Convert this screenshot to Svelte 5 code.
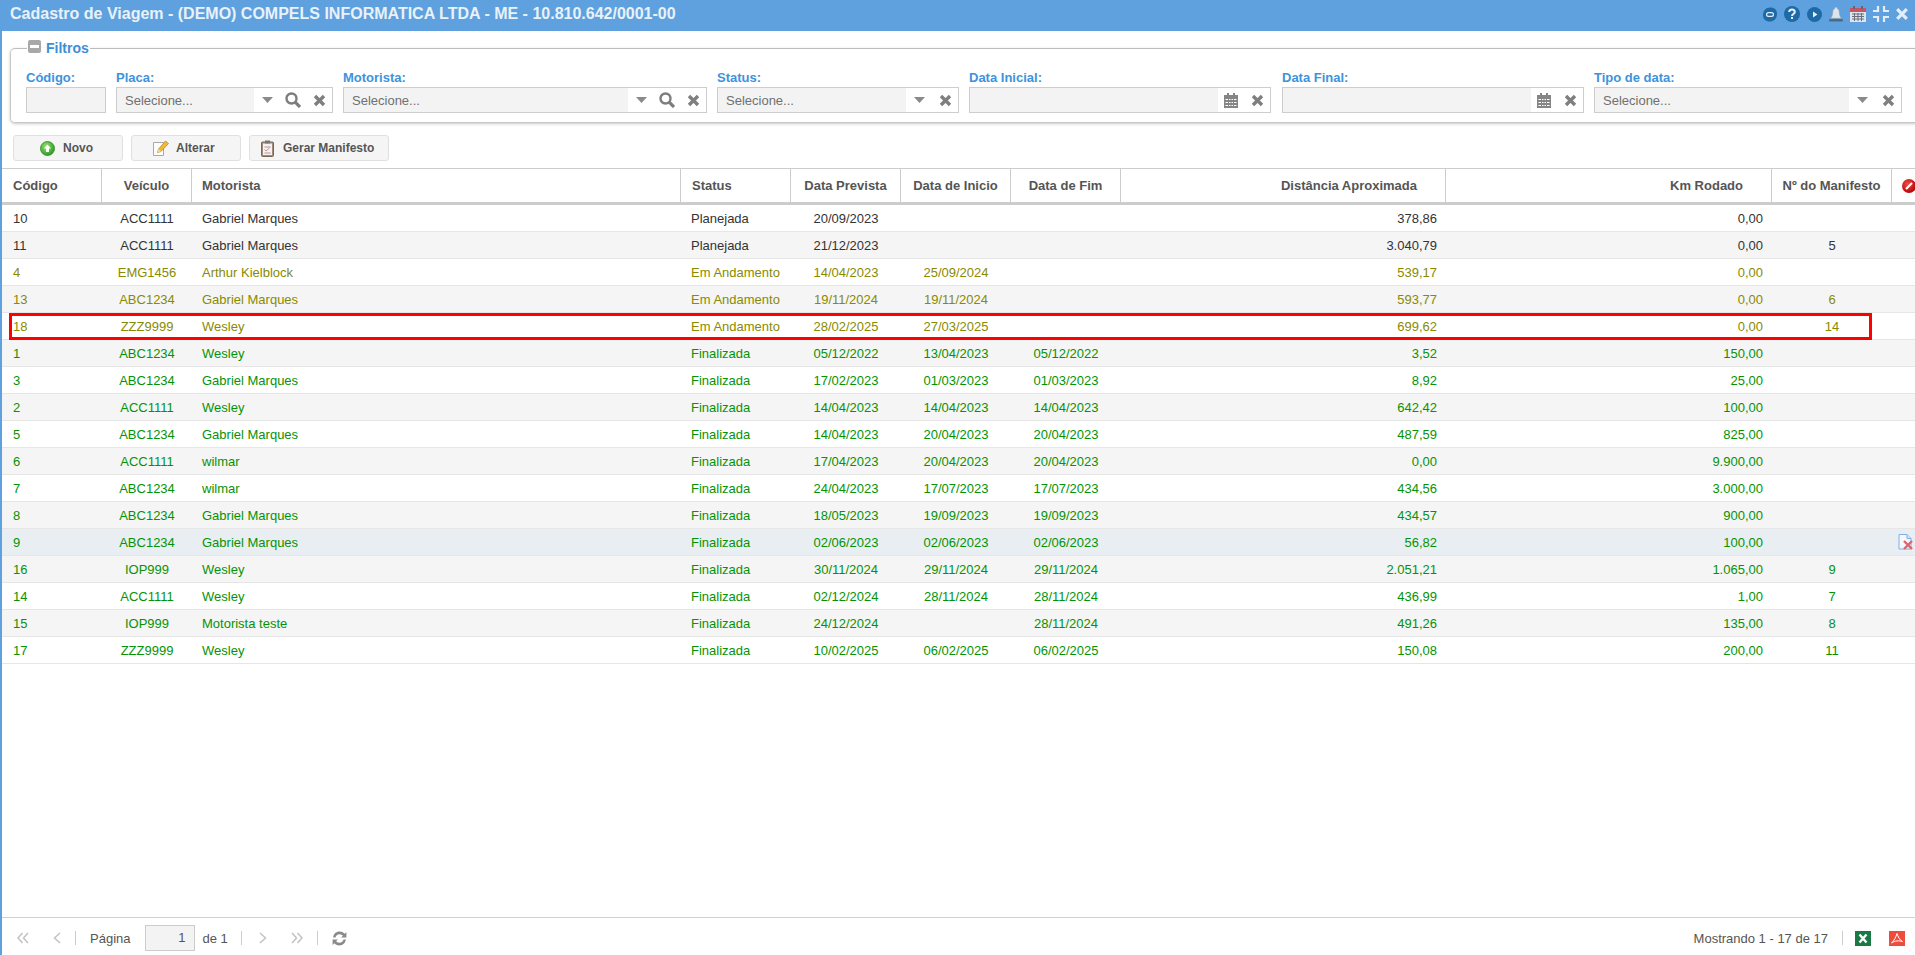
<script>
  const P = 'p', A = 'a', F = 'f';
  const statusName = { p: 'Planejada', a: 'Em Andamento', f: 'Finalizada' };
  const rows = [
    ['10','ACC1111','Gabriel Marques',P,'20/09/2023','','','378,86','0,00',''],
    ['11','ACC1111','Gabriel Marques',P,'21/12/2023','','','3.040,79','0,00','5'],
    ['4','EMG1456','Arthur Kielblock',A,'14/04/2023','25/09/2024','','539,17','0,00',''],
    ['13','ABC1234','Gabriel Marques',A,'19/11/2024','19/11/2024','','593,77','0,00','6'],
    ['18','ZZZ9999','Wesley',A,'28/02/2025','27/03/2025','','699,62','0,00','14'],
    ['1','ABC1234','Wesley',F,'05/12/2022','13/04/2023','05/12/2022','3,52','150,00',''],
    ['3','ABC1234','Gabriel Marques',F,'17/02/2023','01/03/2023','01/03/2023','8,92','25,00',''],
    ['2','ACC1111','Wesley',F,'14/04/2023','14/04/2023','14/04/2023','642,42','100,00',''],
    ['5','ABC1234','Gabriel Marques',F,'14/04/2023','20/04/2023','20/04/2023','487,59','825,00',''],
    ['6','ACC1111','wilmar',F,'17/04/2023','20/04/2023','20/04/2023','0,00','9.900,00',''],
    ['7','ABC1234','wilmar',F,'24/04/2023','17/07/2023','17/07/2023','434,56','3.000,00',''],
    ['8','ABC1234','Gabriel Marques',F,'18/05/2023','19/09/2023','19/09/2023','434,57','900,00',''],
    ['9','ABC1234','Gabriel Marques',F,'02/06/2023','02/06/2023','02/06/2023','56,82','100,00',''],
    ['16','IOP999','Wesley',F,'30/11/2024','29/11/2024','29/11/2024','2.051,21','1.065,00','9'],
    ['14','ACC1111','Wesley',F,'02/12/2024','28/11/2024','28/11/2024','436,99','1,00','7'],
    ['15','IOP999','Motorista teste',F,'24/12/2024','','28/11/2024','491,26','135,00','8'],
    ['17','ZZZ9999','Wesley',F,'10/02/2025','06/02/2025','06/02/2025','150,08','200,00','11']
  ];
  const filters = [
    { label: 'Código:', kind: 'plain' },
    { label: 'Placa:', kind: 'select', text: 'Selecione...', search: true },
    { label: 'Motorista:', kind: 'select', text: 'Selecione...', search: true },
    { label: 'Status:', kind: 'select', text: 'Selecione...' },
    { label: 'Data Inicial:', kind: 'date' },
    { label: 'Data Final:', kind: 'date' },
    { label: 'Tipo de data:', kind: 'select', text: 'Selecione...' }
  ];
  const cols = ['c1','c2','c3','c4','c5','c5','c5','c6','c7','c8','c9'];
</script>

{#snippet xIcon()}
  <svg width="13" height="13" viewBox="0 0 13 13"><path d="M2 2 L11 11 M11 2 L2 11" stroke="#7f7f7f" stroke-width="3.4" fill="none"/></svg>
{/snippet}
{#snippet caret()}
  <svg width="11" height="6" viewBox="0 0 11 6"><path d="M0 0 H11 L5.5 6 Z" fill="#8a8a8a"/></svg>
{/snippet}
{#snippet searchIcon()}
  <svg width="16" height="16" viewBox="0 0 16 16"><circle cx="6.5" cy="6.5" r="5" fill="none" stroke="#7d7d7d" stroke-width="2.4"/><path d="M10.2 10.2 L15 15" stroke="#7d7d7d" stroke-width="3.2"/></svg>
{/snippet}
{#snippet calIcon()}
  <svg width="14" height="16" viewBox="0 0 14 16"><path d="M0 3 H14 V16 H0 Z" fill="#858585"/><rect x="3" y="1" width="2" height="3" fill="#858585"/><rect x="9" y="1" width="2" height="3" fill="#858585"/><path d="M1.5 7.5 H12.5 M1.5 10.5 H12.5 M1.5 13.5 H12.5" stroke="#fff" stroke-width="1"/><path d="M4.5 6.5 V15 M7 6.5 V15 M9.5 6.5 V15" stroke="#858585" stroke-width="1"/></svg>
{/snippet}

<div class="app">
  <header class="titlebar">
    <h1>Cadastro de Viagem - (DEMO) COMPELS INFORMATICA LTDA - ME - 10.810.642/0001-00</h1>
    <div class="tools">
      <svg width="14" height="15" viewBox="0 0 14 15"><path d="M7 .5 C11 .5 14 2 14 7 C14 12 10.5 14.5 6.5 14.5 C2.5 14.5 0 12 0 8 C0 3.5 3 .5 7 .5 Z" fill="#1d6aa6"/><rect x="3.6" y="5.6" width="6.8" height="3.8" rx="1.9" fill="none" stroke="#e6f0f8" stroke-width="1.2"/></svg>
      <svg width="16" height="16" viewBox="0 0 16 16"><circle cx="8" cy="8" r="8" fill="#1d6aa6"/><path d="M5.2 6 C5.2 2.6 10.8 2.6 10.8 6 C10.8 8 8 8 8 10" fill="none" stroke="#e6f0f8" stroke-width="2"/><rect x="7" y="11" width="2" height="2" fill="#e6f0f8"/></svg>
      <svg width="15" height="15" viewBox="0 0 15 15"><circle cx="7.5" cy="7.5" r="7.5" fill="#1d6aa6"/><path d="M6 4.5 L10.5 7.5 L6 10.5 Z" fill="#e6f0f8"/></svg>
      <svg width="14" height="15" viewBox="0 0 14 15"><path d="M7 0 C8 0 8.3 1 8.3 1.6 C10 2.4 10.3 4 10.4 6 C10.5 8.5 11.5 10.3 12.6 11.3 H1.4 C2.5 10.3 3.5 8.5 3.6 6 C3.7 4 4 2.4 5.7 1.6 C5.7 1 6 0 7 0 Z" fill="#dde4ec" stroke="#8b9bab" stroke-width=".6"/><rect x="0" y="12" width="14" height="2.4" rx="1" fill="#4f6a85"/></svg>
      <svg width="16" height="16" viewBox="0 0 16 16"><rect x="0" y="2" width="16" height="14" fill="#dfe5ea"/><rect x="0" y="2" width="16" height="4" fill="#c9545d"/><rect x="3" y="0" width="2" height="3" fill="#5a6a7a"/><rect x="11" y="0" width="2" height="3" fill="#5a6a7a"/><path d="M2 8 H14 M2 10.5 H14 M2 13 H14 M4.5 7 V15 M8 7 V15 M11.5 7 V15" stroke="#66707c" stroke-width="1"/></svg>
      <svg width="16" height="16" viewBox="0 0 16 16"><path d="M5 0 V5 H0 M11 0 V5 H16 M5 16 V11 H0 M11 16 V11 H16" fill="none" stroke="#e3eef9" stroke-width="2.2"/></svg>
      <svg width="12" height="12" viewBox="0 0 12 12"><path d="M1.2 1.2 L10.8 10.8 M10.8 1.2 L1.2 10.8" stroke="#e3eef9" stroke-width="3.2"/></svg>
    </div>
  </header>

  <main class="content">
    <fieldset class="filters">
      <legend>
        <span class="collapse"><span></span></span>
        <span>Filtros</span>
      </legend>
      <div class="fields">
        {#each filters as f}
          <div class="field">
            <label for={f.label}>{f.label}</label>
            <div class="box">
              <div class="grey" id={f.label}>{f.text ?? ''}</div>
              {#if f.kind === 'select'}
                <span class="trig">{@render caret()}</span>
                {#if f.search}<span class="trig">{@render searchIcon()}</span>{/if}
                <span class="trig">{@render xIcon()}</span>
              {:else if f.kind === 'date'}
                <span class="trig">{@render calIcon()}</span>
                <span class="trig">{@render xIcon()}</span>
              {/if}
            </div>
          </div>
        {/each}
      </div>
    </fieldset>

    <div class="actions">
      <button class="b1">
        <svg width="15" height="15" viewBox="0 0 15 15"><defs><radialGradient id="gn" cx=".4" cy=".35" r=".7"><stop offset="0" stop-color="#9be26f"/><stop offset="1" stop-color="#1f9a1c"/></radialGradient></defs><circle cx="7.5" cy="7.5" r="7" fill="url(#gn)" stroke="#2c8a24" stroke-width=".8"/><path d="M7.5 3.5 L11 7.5 H9 V11 H6 V7.5 H4 Z" fill="#fff"/></svg>
        <span>Novo</span>
      </button>
      <button class="b2">
        <svg width="16" height="16" viewBox="0 0 16 16"><path d="M.5 2.5 H10.5 V15.5 H.5 Z" fill="#fdfdfd" stroke="#a8a8a8"/><path d="M4.5 12.5 L5.5 9 L12.5 1 L15.5 3.5 L8 11.5 Z" fill="#f0b93c" stroke="#b5811f" stroke-width=".7"/><path d="M4.5 12.5 L5.5 9 L8 11.5 Z" fill="#e8d7b0"/></svg>
        <span>Alterar</span>
      </button>
      <button class="b3">
        <svg width="13" height="17" viewBox="0 0 13 17"><rect x=".5" y="2" width="12" height="14.5" rx="1" fill="#a08a78" stroke="#7a675a"/><rect x="2" y="3.5" width="9" height="11.5" fill="#f2f2f2"/><rect x="4" y=".5" width="5" height="3" fill="#777"/><path d="M3.5 7 H9.5 M3.5 9.5 L5 11 L8.5 8 M3.5 13 H9.5" stroke="#b77" stroke-width=".8" fill="none"/></svg>
        <span>Gerar Manifesto</span>
      </button>
    </div>

    <div class="grid">
      <table>
        <colgroup>
          {#each cols as c}<col class={c} />{/each}
        </colgroup>
        <thead>
          <tr>
            <th class="left first">Código</th>
            <th>Veículo</th>
            <th class="left mot">Motorista</th>
            <th class="left sta">Status</th>
            <th>Data Prevista</th>
            <th>Data de Inicio</th>
            <th>Data de Fim</th>
            <th class="right">Distância Aproximada</th>
            <th class="right">Km Rodado</th>
            <th>Nº do Manifesto</th>
            <th class="del">
              <svg width="14" height="14" viewBox="0 0 14 14"><defs><radialGradient id="rd" cx=".4" cy=".35" r=".7"><stop offset="0" stop-color="#f04a4a"/><stop offset="1" stop-color="#b00000"/></radialGradient></defs><circle cx="7" cy="7" r="7" fill="url(#rd)"/><path d="M4 10 L10 4" stroke="#fff" stroke-width="2.2"/></svg>
            </th>
          </tr>
        </thead>
        <tbody>
          {#each rows as r, i}
            <tr class={[r[3], i === 12 ? 'hover' : i % 2 ? 'odd' : ''].join(' ')}>
              <td class="left first">{r[0]}</td>
              <td>{r[1]}</td>
              <td class="left mot">{r[2]}</td>
              <td class="left sta">{statusName[r[3]]}</td>
              <td>{r[4]}</td>
              <td>{r[5]}</td>
              <td>{r[6]}</td>
              <td class="right">{r[7]}</td>
              <td class="right">{r[8]}</td>
              <td>{r[9]}</td>
              <td class="del">
                {#if i === 12}
                  <svg width="16" height="16" viewBox="0 0 16 16"><path d="M1 .5 H9 L13 4.5 V15 H1 Z" fill="#f4f8fd" stroke="#7fb0e6"/><path d="M9 .5 V4.5 H13" fill="#cfe0f5" stroke="#7fb0e6"/><path d="M6 7 L14 15 M14 7 L6 15" stroke="#e0646c" stroke-width="2.4"/></svg>
                {/if}
              </td>
            </tr>
          {/each}
        </tbody>
      </table>
      <div class="mark"></div>
    </div>

    <footer class="pager">
      <div class="pg-left">
        <svg class="nav n1" width="12" height="12" viewBox="0 0 12 12"><path d="M5.5 1 L1 6 L5.5 11 M11 1 L6.5 6 L11 11" fill="none" stroke="#c4c4c4" stroke-width="1.6"/></svg>
        <svg class="nav n2" width="8" height="12" viewBox="0 0 8 12"><path d="M7 1 L1.5 6 L7 11" fill="none" stroke="#c4c4c4" stroke-width="1.6"/></svg>
        <span class="sep s1"></span>
        <span class="txt pagina">Página</span>
        <span class="pageinput">1</span>
        <span class="txt deum">de 1</span>
        <span class="sep s2"></span>
        <svg class="nav n3" width="8" height="12" viewBox="0 0 8 12"><path d="M1 1 L6.5 6 L1 11" fill="none" stroke="#c4c4c4" stroke-width="1.6"/></svg>
        <svg class="nav n4" width="12" height="12" viewBox="0 0 12 12"><path d="M1 1 L5.5 6 L1 11 M6.5 1 L11 6 L6.5 11" fill="none" stroke="#c4c4c4" stroke-width="1.6"/></svg>
        <span class="sep s3"></span>
        <svg class="nav n5" width="17" height="17" viewBox="0 0 16 16"><path d="M2 7 C2.5 3.5 5 1.5 8 1.5 C10.5 1.5 12 2.8 12.8 3.6 L14.5 2 V7 H9.5 L11.2 5.3 C10.5 4.6 9.5 3.9 8 3.9 C6 3.9 4.6 5.2 4.2 7 Z M14 9 C13.5 12.5 11 14.5 8 14.5 C5.5 14.5 4 13.2 3.2 12.4 L1.5 14 V9 H6.5 L4.8 10.7 C5.5 11.4 6.5 12.1 8 12.1 C10 12.1 11.4 10.8 11.8 9 Z" fill="#8a8a8a"/></svg>
      </div>
      <div class="pg-right">
        <span class="txt">Mostrando 1 - 17 de 17</span>
        <span class="sep s4"></span>
        <svg class="xls" width="16" height="15" viewBox="0 0 16 15"><rect width="16" height="15" fill="#1b7a43"/><path d="M4.5 3.5 L11.5 11.5 M11.5 3.5 L4.5 11.5" stroke="#fff" stroke-width="2.4"/></svg>
        <svg class="pdf" width="16" height="15" viewBox="0 0 16 15"><rect width="16" height="15" fill="#ee4c3c"/><path d="M8 2.5 C7 6 5 10 2.5 12 C6 9.5 10 9.5 13.5 10.5 C10.5 9 9 5.5 8 2.5 Z" fill="none" stroke="#fff" stroke-width="1"/></svg>
      </div>
    </footer>
  </main>
</div>

<style>
  :global(body) { margin: 0; background: #fff; font-family: "Liberation Sans", Arial, sans-serif; }
  .app { height: 955px; width: 1915px; display: flex; flex-direction: column; overflow: hidden; }
  .titlebar { height: 31px; flex: none; background: #5fa1de; display: flex; align-items: center; justify-content: space-between; padding: 0 7px 0 10px; box-sizing: border-box; }
  h1 { margin: 0; font-size: 16px; font-weight: bold; color: #e9f1f9; line-height: 28px; white-space: nowrap; align-self: flex-start; }
  .tools { display: flex; align-items: center; gap: 7px; height: 28px; align-self: flex-start; }
  .content { flex: 1; min-height: 0; display: flex; flex-direction: column; border-left: 2px solid #5fa1de; }

  .filters { margin: 9px -20px 0 8px; padding: 14px 15px 9px 15px; border: 1px solid #c8c8c8; border-top-color: #bdbdbd; border-radius: 5px; box-shadow: 0 1px 3px rgba(0,0,0,.22); min-width: 0; }
  legend { padding: 0 1px; margin-left: 1px; height: 16px; display: flex; align-items: center; gap: 5px; font-size: 14px; font-weight: bold; color: #3d8ed8; line-height: 16px; }
  .collapse { width: 13px; height: 13px; border-radius: 2px; background: #a8a8a8; display: flex; align-items: center; justify-content: center; margin-top: -4px; }
  .collapse span { width: 9px; height: 3px; background: #fff; }
  .fields { display: grid; grid-template-columns: 80px 217px 364px 242px 302px 303px 308px; column-gap: 10px; justify-content: start; }
  .field { display: flex; flex-direction: column; min-width: 0; }
  .field:nth-child(6) { margin-left: 1px; }
  label { font-size: 13px; font-weight: bold; color: #3d93dc; line-height: 16px; margin-bottom: 1px; }
  .box { height: 26px; box-sizing: border-box; border: 1px solid #cdcdcd; display: flex; align-items: stretch; background: #fff; }
  .grey { flex: 1; min-width: 0; background: #f3f3f3; font-size: 13px; line-height: 26px; height: 24px; color: #707070; padding-left: 8px; }
  .trig { width: 26px; flex: none; display: flex; align-items: center; justify-content: center; }

  .actions { display: flex; gap: 8px; margin: 12px 0 7px 11px; height: 26px; flex: none; }
  button { box-sizing: border-box; height: 26px; border: 1px solid #e0e0e0; border-radius: 3px; background: #f5f5f5; display: flex; align-items: center; padding: 0; font: bold 12px "Liberation Sans", Arial, sans-serif; color: #555; }
  .b1 { width: 110px; padding-left: 26px; gap: 8px; }
  .b2 { width: 110px; padding-left: 21px; gap: 7px; }
  .b3 { width: 140px; padding-left: 11px; gap: 9px; }

  .grid { position: relative; flex: 1; min-height: 0; overflow: hidden; }
  table { width: 1913px; table-layout: fixed; border-collapse: separate; border-spacing: 0; font-size: 13px; }
  .c1 { width: 100px; } .c2 { width: 90px; } .c3 { width: 489px; } .c4, .c5 { width: 110px; }
  .c6 { width: 325px; } .c7 { width: 326px; } .c8 { width: 120px; } .c9 { width: 23px; }
  th { height: 37px; box-sizing: border-box; border-top: 1px solid #ccc; border-bottom: 3px solid #ccc; border-right: 1px solid #ccc; color: #555; font-weight: bold; padding: 0; text-align: center; white-space: nowrap; }
  td { height: 27px; box-sizing: border-box; border-bottom: 1px solid #e6e6e6; padding: 0; text-align: center; white-space: nowrap; color: #333; }
  th:last-child { border-right: 0; text-align: left; padding-left: 10px; overflow: hidden; }
  th svg { display: block; }
  .left { text-align: left; }
  .first { padding-left: 11px; }
  .mot { padding-left: 10px; }
  .sta { padding-left: 11px; }
  td.sta { padding-left: 10px; }
  th.right { text-align: right; padding-right: 28px; }
  td.right { text-align: right; padding-right: 9px; }
  td.del { text-align: left; padding-left: 6px; overflow: hidden; }
  td.del svg { display: block; }
  .odd td { background: #f5f5f5; }
  .hover td { background: #e9eef2; }
  .a td { color: #8a8a00; }
  .f td { color: #059305; }
  .mark { position: absolute; left: 7px; top: 145px; width: 1863px; height: 27px; box-sizing: border-box; border: 3px solid #f00; }

  .pager { height: 38px; box-sizing: border-box; padding-top: 3px; flex: none; border-top: 1px solid #d0d0d0; display: flex; align-items: center; justify-content: space-between; font-size: 13px; color: #555; }
  .pg-left, .pg-right { display: flex; align-items: center; }
  .txt { white-space: nowrap; }
  .sep { width: 1px; height: 14px; background: #ccc; flex: none; }
  .n1 { margin-left: 15px; } .n2 { margin-left: 24px; }
  .s1 { margin-left: 14px; }
  .pagina { margin-left: 14px; }
  .pageinput { margin-left: 15px; width: 50px; height: 26px; box-sizing: border-box; border: 1px solid #ccc; background: #f3f3f3; text-align: right; padding-right: 9px; line-height: 24px; }
  .deum { margin-left: 7px; }
  .s2 { margin-left: 13px; }
  .n3 { margin-left: 17px; } .n4 { margin-left: 24px; }
  .s3 { margin-left: 14px; }
  .n5 { margin-left: 13px; }
  .s4 { margin-left: 14px; }
  .xls { margin-left: 12px; }
  .pdf { margin-left: 18px; margin-right: 10px; }
</style>
